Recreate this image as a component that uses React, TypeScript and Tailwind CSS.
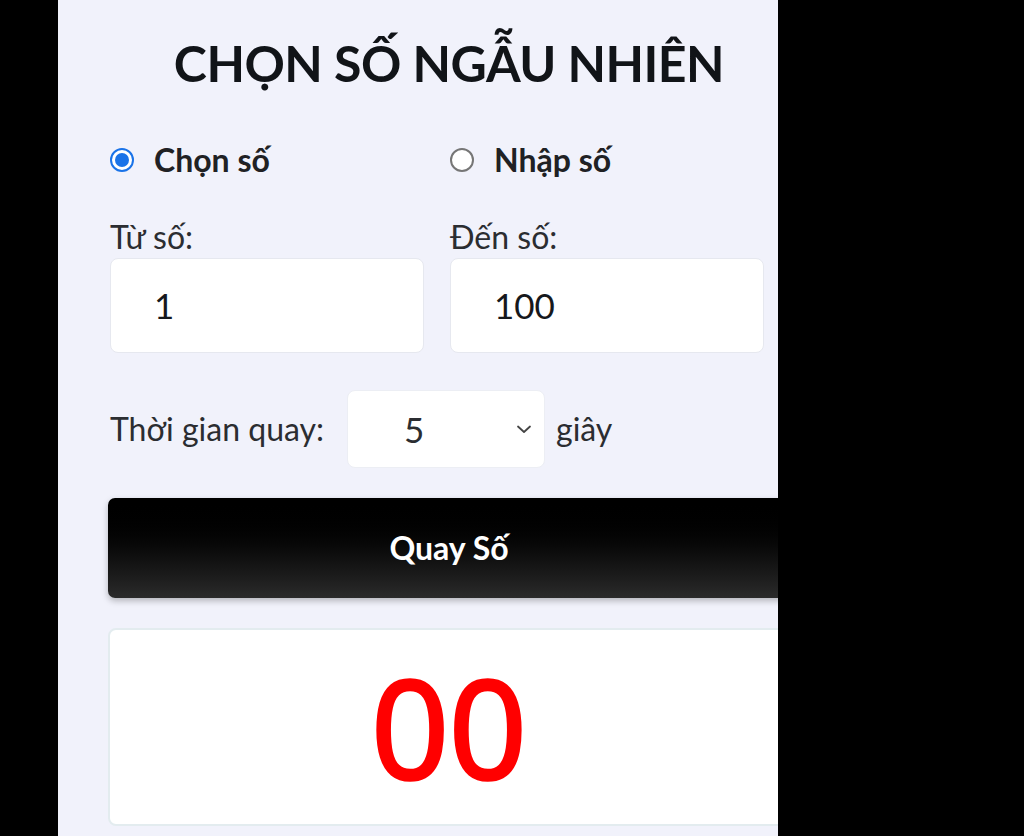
import React, { useState } from "react";

function Radio({ checked, label }: { checked: boolean; label: string }) {
  return (
    <label className="flex items-center gap-[20px] h-[32px] cursor-pointer">
      {checked ? (
        <span className="w-[24px] h-[24px] rounded-full border-[2px] border-[#1a73e8] bg-white flex items-center justify-center">
          <span className="w-[14px] h-[14px] rounded-full bg-[#1a73e8]" />
        </span>
      ) : (
        <span className="w-[24px] h-[24px] rounded-full border-[2px] border-[#767676] bg-white" />
      )}
      <span className="text-[32px] font-bold text-[#202124] leading-none">{label}</span>
    </label>
  );
}

function NumberBox({ label, value }: { label: string; value: string }) {
  return (
    <div className="flex flex-col">
      <span className="text-[32px] text-[#2b2d31] leading-none h-[32px]">{label}</span>
      <div className="mt-[5px] h-[95px] rounded-[8px] bg-white border border-[#e6e8ef] flex items-center pl-[43px] text-[35px] text-[#16181c]">
        {value}
      </div>
    </div>
  );
}

export default function App() {
  const [mode] = useState("chon");

  return (
    <div className="min-h-screen bg-black flex" style={{ fontFamily: "Lato, 'Noto Sans', sans-serif" }}>
      <div className="ml-[58px] w-[720px] h-[836px] overflow-hidden bg-[#f1f2fb]">
        <div className="w-[682px] ml-[50px]">
          <h1 className="text-center text-[50px] font-bold tracking-[-0.5px] text-[#111418] leading-none pt-[38px] h-[89px]">
            CHỌN SỐ NGẪU NHIÊN
          </h1>

          <div className="grid grid-cols-[314px_314px] gap-x-[26px] ml-[2px] mt-[55px]">
            <Radio checked={mode === "chon"} label="Chọn số" />
            <Radio checked={mode === "nhap"} label="Nhập số" />
          </div>

          <div className="grid grid-cols-[314px_314px] gap-x-[26px] ml-[2px] mt-[45px]">
            <NumberBox label="Từ số:" value="1" />
            <NumberBox label="Đến số:" value="100" />
          </div>

          <div className="flex items-center ml-[2px] mt-[37px]">
            <span className="text-[32px] text-[#2b2d31]">Thời gian quay:</span>
            <div className="ml-[23px] w-[198px] h-[78px] rounded-[8px] bg-white border border-[#eceef4] flex items-center pl-[56px] pr-[11px]">
              <span className="text-[35px] text-[#2b2d31] flex-1">5</span>
              <svg width="18" height="12" viewBox="0 0 18 12" fill="none">
                <path d="M3 3.5 L9 9 L15 3.5" stroke="#444" strokeWidth="1.8" strokeLinecap="round" strokeLinejoin="round" />
              </svg>
            </div>
            <span className="ml-[11px] text-[32px] text-[#2b2d31]">giây</span>
          </div>

          <button className="mt-[30px] w-full h-[100px] rounded-[7px] bg-gradient-to-b from-[#000000] to-[#2b2b2b] shadow-[0_3px_6px_rgba(0,0,0,0.25)] text-white text-[32px] font-bold">
            Quay Số
          </button>

          <div className="mt-[30px] h-[198px] rounded-[8px] bg-white border-2 border-[#e3ecef] flex items-center justify-center">
            <span
              className="text-[#ff0000] text-[136px] font-normal leading-none [-webkit-text-stroke:3.5px_#ff0000]"
              style={{ fontFamily: "'Open Sans', sans-serif" }}
            >
              00
            </span>
          </div>
        </div>
      </div>
    </div>
  );
}
